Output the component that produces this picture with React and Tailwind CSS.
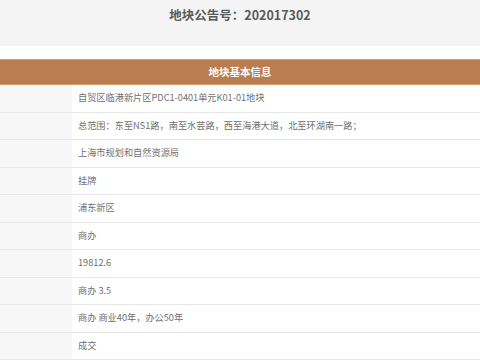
export default function App() {
  const rows = [
    "自贸区临港新片区PDC1-0401单元K01-01地块",
    "总范围：东至NS1路，南至水芸路，西至海港大道，北至环湖南一路；",
    "上海市规划和自然资源局",
    "挂牌",
    "浦东新区",
    "商办",
    "19812.6",
    "商办 3.5",
    "商办 商业40年，办公50年",
    "成交",
  ];
  return (
    <div className="w-[480px] h-[360px] overflow-hidden bg-white font-['Noto_Sans_CJK_SC',sans-serif]">
      <div className="h-[46px] bg-[#f4f4f4] flex justify-center pt-[5px]">
        <span className="text-[12.5px] font-bold leading-[20px] text-[#5a5a5a]">地块公告号：202017302</span>
      </div>
      <div className="h-[13px]" />
      <div className="h-[26px] bg-[#b97d4f] border-y border-[#d39a70] flex items-center justify-center">
        <span className="text-[10.5px] font-bold text-white leading-none">地块基本信息</span>
      </div>
      {rows.map((r, i) => (
        <div key={i} className="flex h-[27.5px] border-b border-[#e8e8e8]">
          <div className="w-[72px] bg-[#f7f7f7]" />
          <div className="flex-1 flex items-center pl-[6px] text-[9.2px] text-[#707070] whitespace-nowrap">{r}</div>
        </div>
      ))}
    </div>
  );
}
